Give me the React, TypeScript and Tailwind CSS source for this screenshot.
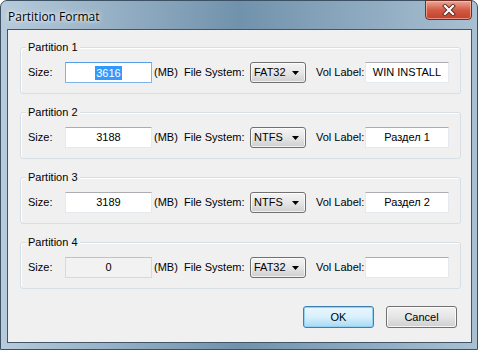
import React from 'react';

type Part = {
  title: string;
  size: string;
  fs: string;
  label: string;
  focused?: boolean;
  disabled?: boolean;
};

const parts: Part[] = [
  { title: 'Partition 1', size: '3616', fs: 'FAT32', label: 'WIN INSTALL', focused: true },
  { title: 'Partition 2', size: '3188', fs: 'NTFS', label: 'Раздел 1' },
  { title: 'Partition 3', size: '3189', fs: 'NTFS', label: 'Раздел 2' },
  { title: 'Partition 4', size: '0', fs: 'FAT32', label: '', disabled: true },
];

const ui = { fontFamily: '"Liberation Sans", Arial, sans-serif' };

function Combo({ value }: { value: string }) {
  return (
    <div className="flex h-[21px] w-[56px] shrink-0 items-center justify-between rounded-[3px] border border-[#707070] bg-gradient-to-b from-[#f4f4f4] via-[#e6e6e6] to-[#cfcfcf] pl-[3px] pr-[6px] shadow-[inset_0_0_0_1px_rgba(255,255,255,0.7)]">
      <span className="text-[11px] text-black">{value}</span>
      <svg width="7" height="4" viewBox="0 0 7 4">
        <path d="M0 0h7L3.5 4z" fill="#000" />
      </svg>
    </div>
  );
}

// text box, win7 style
function TextBox({ w, value, focused, disabled }: { w: string; value: string; focused?: boolean; disabled?: boolean }) {
  let cls = 'border-[#e3e9ef] border-t-[#abadb3] bg-white';
  if (focused) cls = 'border-[#7eb4ea] border-t-[#569de5] bg-white';
  if (disabled) cls = 'border-[#d9d9d9] border-t-[#c2c2c2] bg-[#f2f2f2]';
  return (
    <div className={`flex h-[21px] ${w} shrink-0 items-center justify-center border ${cls} text-[11px] text-black`}>
      {focused ? <span className="bg-[#3399ff] px-[1px] leading-[14px] text-white">{value}</span> : value}
    </div>
  );
}

function Group({ p }: { p: Part }) {
  return (
    <div className="relative h-[47px] rounded-[3px] border border-[#d5dfe5] shadow-[inset_1px_1px_0_#ffffff]">
      <span className="absolute -top-[8px] left-[5px] bg-[#f0f0f0] px-[2px] text-[11px] leading-[14px] text-black">
        {p.title}
      </span>
      <div className="flex items-center whitespace-nowrap pl-[7px] pt-[14px] text-[11px] text-black">
        <span className="w-[37px] shrink-0">Size:</span>
        <TextBox w="w-[87px]" value={p.size} focused={p.focused} disabled={p.disabled} />
        <span className="ml-[2px] w-[30px] shrink-0">(MB)</span>
        <span className="w-[66px] shrink-0">File System:</span>
        <Combo value={p.fs} />
        <span className="ml-[10px] w-[49px] shrink-0">Vol Label:</span>
        <TextBox w="w-[84px]" value={p.label} />
      </div>
    </div>
  );
}

export default function App() {
  return (
    <div style={ui} className="h-[350px] w-[478px] overflow-hidden bg-white">
      <div className="flex h-full w-full flex-col rounded-t-[7px] border border-[#3c5264] bg-gradient-to-r from-[#b7cbdb] via-[#7192ac] to-[#a9c0d2]">
        {/* title bar */}
        <div className="flex h-[28px] items-start justify-between">
          <span
            className="pl-[7px] pt-[7px] text-[12px] text-black"
            style={{ fontFamily: '"Open Sans", "Noto Sans", sans-serif', textShadow: '0 0 6px #fff, 0 0 3px #fff' }}
          >
            Partition Format
          </span>
          <div className="-mt-[1px] mr-[5px] flex h-[20px] w-[47px] items-center justify-center rounded-b-[4px] border border-[#6e2f27] bg-gradient-to-b from-[#e9a899] via-[#d35a43] to-[#c2412c] shadow-[inset_0_0_0_1px_rgba(255,200,190,0.6)]">
            <svg width="14" height="12" viewBox="0 0 14 12">
              <path d="M3 2l8 8M11 2l-8 8" stroke="#5a2a24" strokeWidth="4" strokeLinecap="square" />
              <path d="M3 2l8 8M11 2l-8 8" stroke="#ffffff" strokeWidth="2.2" strokeLinecap="square" />
            </svg>
          </div>
        </div>

        {/* client area */}
        <div className="mx-[5px] mb-[6px] ml-[6px] flex flex-1 flex-col border border-[#415669] bg-[#f0f0f0] pl-[12px] pr-[10px] pt-[17px]">
          <div className="flex flex-col gap-[18px]">
            {parts.map((p) => (
              <Group key={p.title} p={p} />
            ))}
          </div>
          <div className="mt-[17px] flex justify-end gap-[12px] pr-[4px] text-[11px] text-black">
            <button className="h-[22px] w-[71px] rounded-[3px] border border-[#3c7fb1] bg-gradient-to-b from-[#eaf6fd] via-[#d9f0fc] to-[#a7d9f5] shadow-[inset_0_0_0_1px_#93d2f3]">
              OK
            </button>
            <button className="h-[22px] w-[71px] rounded-[3px] border border-[#707070] bg-gradient-to-b from-[#f2f2f2] via-[#e5e5e5] to-[#cfcfcf] shadow-[inset_0_0_0_1px_rgba(255,255,255,0.8)]">
              Cancel
            </button>
          </div>
        </div>
      </div>
    </div>
  );
}
